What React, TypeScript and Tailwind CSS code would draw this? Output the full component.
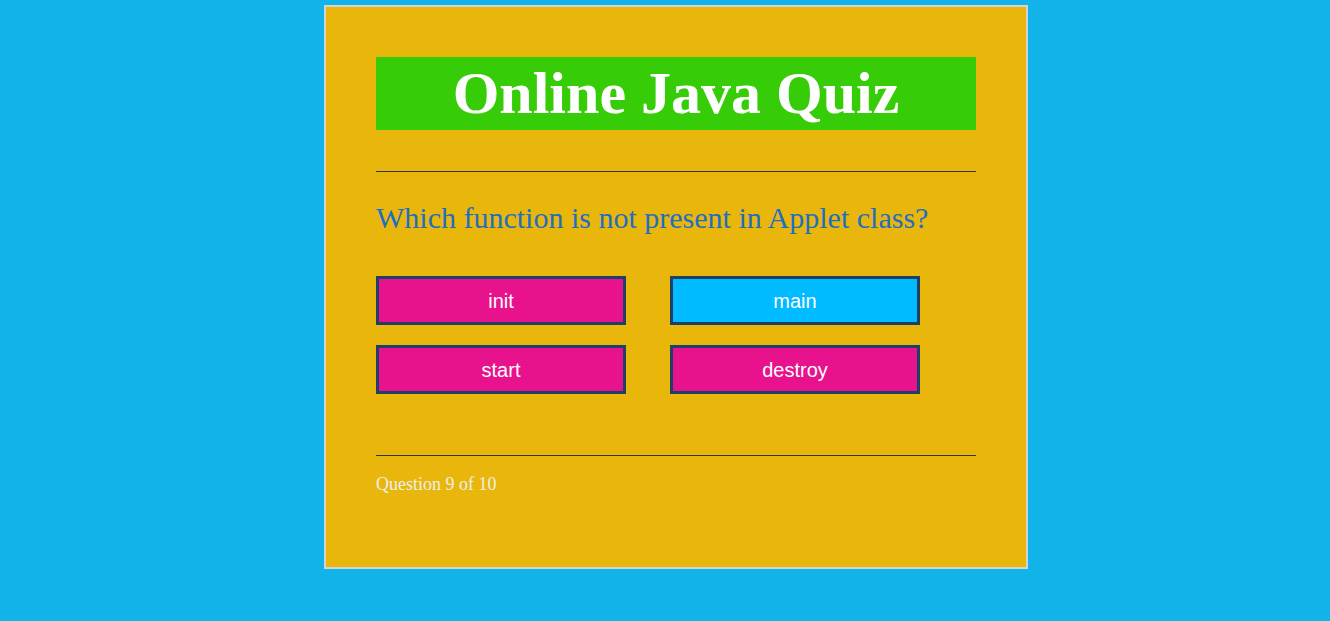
export default function App() {
  const options = [
    { label: "init", active: false },
    { label: "main", active: true },
    { label: "start", active: false },
    { label: "destroy", active: false },
  ];

  return (
    <div className="min-h-[621px] w-full bg-[#11b3e8] pt-[5px]">
      <div className="ml-[324px] w-[704px] h-[564px] border-2 border-[#d4d4d4] bg-[#e9b70c] px-[50px] pt-[50px]">
        <h1 className="h-[73px] bg-[#36cc07] text-center text-[60px] font-bold leading-[73px] text-white font-['Liberation_Serif',serif]">
          Online Java Quiz
        </h1>

        <hr className="mt-[41px] border-t border-[#333] border-b-0" />

        <p className="mt-[28px] text-[30px] leading-[36px] text-[#1f6ec2] font-['Liberation_Serif',serif]">
          Which function is not present in Applet class?
        </p>

        <div className="mt-[40px] grid grid-cols-[250px_250px] gap-x-[44px] gap-y-[20px]">
          {options.map((o) => (
            <button
              key={o.label}
              className={`h-[49px] border-[3px] border-[#1e3f66] text-[20px] text-white font-['Liberation_Sans',sans-serif] ${
                o.active ? "bg-[#00bbff]" : "bg-[#e8128c]"
              }`}
            >
              {o.label}
            </button>
          ))}
        </div>

        <hr className="mt-[61px] border-t border-[#333] border-b-0" />

        <p className="mt-[15px] text-[18px] text-[#eeeeee] font-['Liberation_Serif',serif]">
          Question 9 of 10
        </p>
      </div>
    </div>
  );
}
